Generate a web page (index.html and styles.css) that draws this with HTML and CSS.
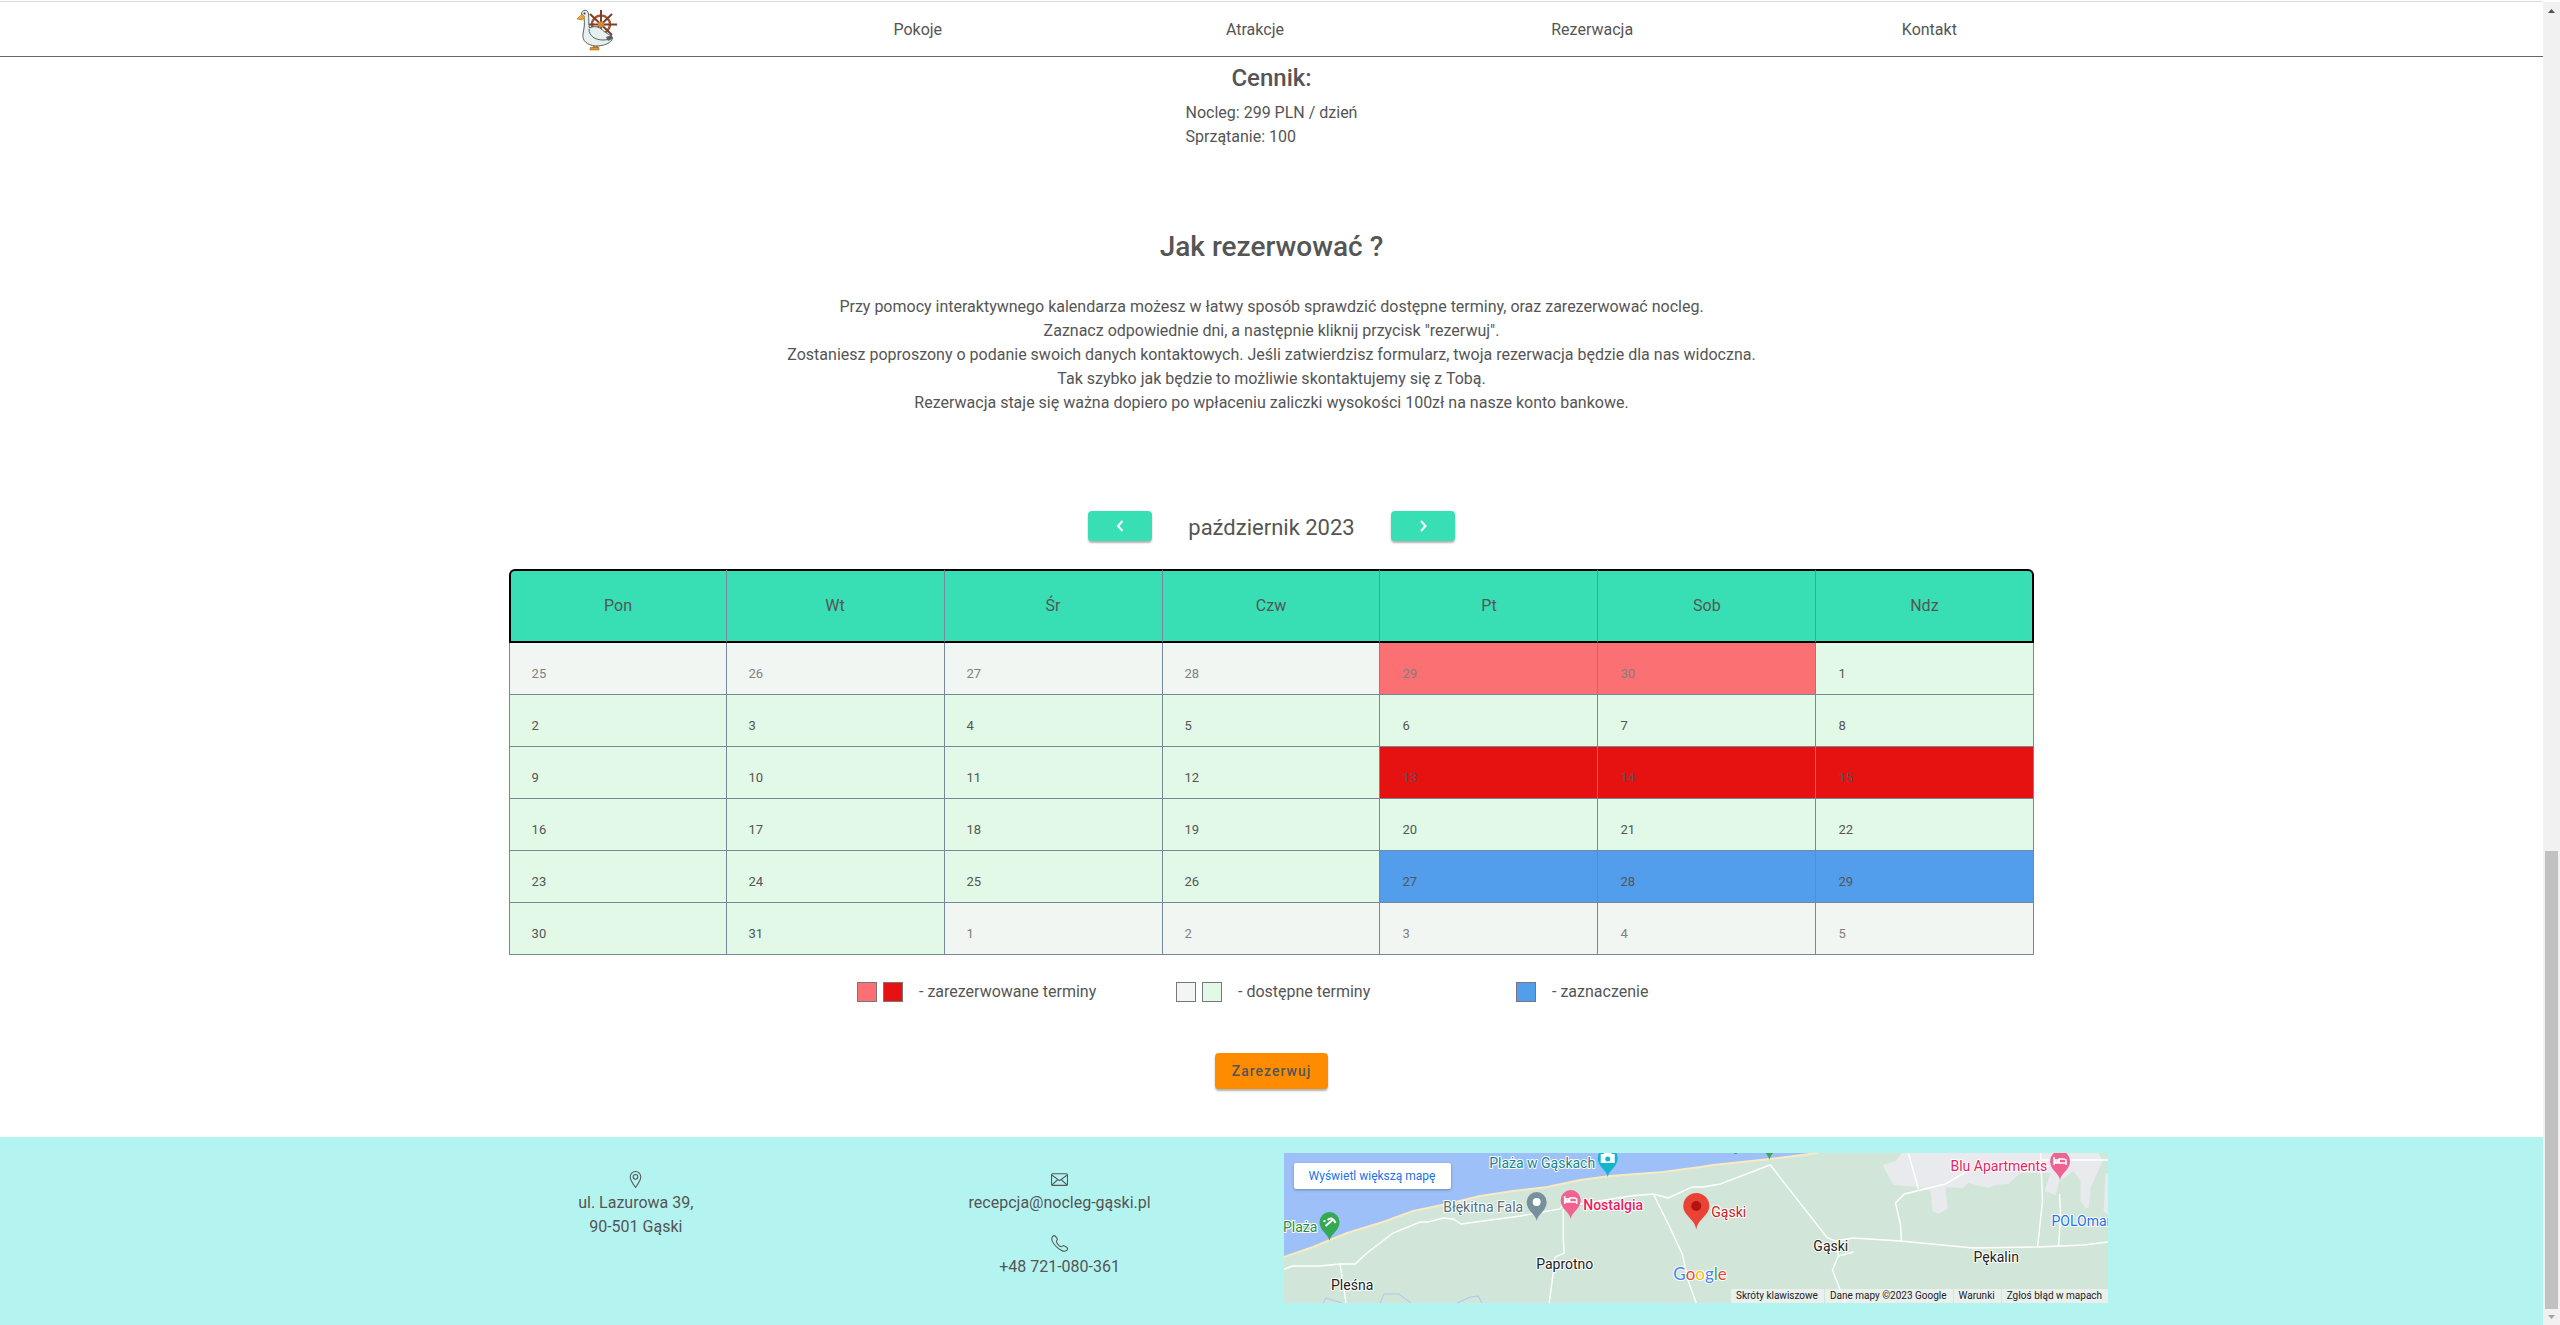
FILE: index.html
```html
<!DOCTYPE html>
<html lang="pl">
<head>
<meta charset="utf-8">
<meta name="viewport" content="width=device-width, initial-scale=1">
<title>Nocleg Gąski</title>
<link rel="stylesheet" href="styles.css">
</head>
<body>
<div class="page">
  <header class="topbar">
    <nav class="nav">
      <a class="nav-logo" href="#" aria-label="Strona główna">
        <svg width="42" height="42" viewBox="0 0 42 42">
          <g fill="none" stroke="#7b3f2c" stroke-width="2">
            <circle cx="24" cy="15.500" r="9" stroke="#a5572f" stroke-width="2.500"/>
            <path d="M24 1v29M9 15.500h31M13 5l22 21M35 5L13 26"/>
          </g>
          <circle cx="24" cy="15.500" r="3" fill="#d98736"/>
          <path d="M17 35v5M20 35v5" stroke="#d98a1c" stroke-width="2.500"/>
          <path d="M13 38.500h9v2.500h-9z" fill="#e09a25" stroke="#7a5a20" stroke-width=".5"/>
          <path d="M4.500 5C5 0 11 0 11.500 5c.5 5 0 11 1 14 4-2 9-2 13 2 4 4 9 5 10 8-1 5-8 8-17 8C10 36 5 32 6 25 7 19 8 15 7 9Z" fill="#e6f0ef" stroke="#5a6062" stroke-width="1"/>
          <path d="M12 20c0 7 6 11 14 11 4 0 8-1 10-3" fill="none" stroke="#5a6062" stroke-width="1"/>
          <path d="M29 28l6-2v4l-4 2z" fill="#5a6062"/>
          <path d="M5 5L0 10l5 1 3-3z" fill="#efa42f" stroke="#8a6420" stroke-width=".5"/>
          <circle cx="7.500" cy="4.500" r="1" fill="#333"/>
        </svg>
      </a>
      <a href="#pokoje">Pokoje</a>
      <a href="#atrakcje">Atrakcje</a>
      <a href="#rezerwacja">Rezerwacja</a>
      <a href="#kontakt">Kontakt</a>
    </nav>
  </header>

  <main class="content">
    <section class="pricing">
      <h3>Cennik:</h3>
      <div>Nocleg: 299 PLN / dzień<br>Sprzątanie: 100</div>
    </section>

    <section class="howto">
      <h2>Jak rezerwować ?</h2>
      <p>Przy pomocy interaktywnego kalendarza możesz w łatwy sposób sprawdzić dostępne terminy, oraz zarezerwować nocleg.<br>
      Zaznacz odpowiednie dni, a następnie kliknij przycisk "rezerwuj".<br>
      Zostaniesz poproszony o podanie swoich danych kontaktowych. Jeśli zatwierdzisz formularz, twoja rezerwacja będzie dla nas widoczna.<br>
      Tak szybko jak będzie to możliwie skontaktujemy się z Tobą.<br>
      Rezerwacja staje się ważna dopiero po wpłaceniu zaliczki wysokości 100zł na nasze konto bankowe.</p>
    </section>

    <section class="calendar">
      <div class="month">
        <button class="month-btn" type="button" aria-label="Poprzedni miesiąc"><svg width="20" height="20" viewBox="0 0 20 20"><path d="M12.500 5L8 10l4.500 5"/></svg></button>
        <span class="month-name">październik 2023</span>
        <button class="month-btn" type="button" aria-label="Następny miesiąc"><svg width="20" height="20" viewBox="0 0 20 20"><path d="M8 5l4.500 5L8 15"/></svg></button>
      </div>
      <table class="days">
        <thead>
          <tr><th>Pon</th><th>Wt</th><th>Śr</th><th>Czw</th><th>Pt</th><th>Sob</th><th>Ndz</th></tr>
        </thead>
        <tbody>
          <tr><td class="out">25</td><td class="out">26</td><td class="out">27</td><td class="out">28</td><td class="out taken-out">29</td><td class="out taken-out">30</td><td>1</td></tr>
          <tr><td>2</td><td>3</td><td>4</td><td>5</td><td>6</td><td>7</td><td>8</td></tr>
          <tr><td>9</td><td>10</td><td>11</td><td>12</td><td class="taken">13</td><td class="taken">14</td><td class="taken">15</td></tr>
          <tr><td>16</td><td>17</td><td>18</td><td>19</td><td>20</td><td>21</td><td>22</td></tr>
          <tr><td>23</td><td>24</td><td>25</td><td>26</td><td class="picked">27</td><td class="picked">28</td><td class="picked">29</td></tr>
          <tr><td>30</td><td>31</td><td class="out">1</td><td class="out">2</td><td class="out">3</td><td class="out">4</td><td class="out">5</td></tr>
        </tbody>
      </table>
      <div class="legend">
        <div class="legend-item"><i class="swatch taken-out"></i><i class="swatch taken"></i><span>- zarezerwowane terminy</span></div>
        <div class="legend-item"><i class="swatch out"></i><i class="swatch free"></i><span>- dostępne terminy</span></div>
        <div class="legend-item"><i class="swatch picked"></i><span>- zaznaczenie</span></div>
      </div>
      <button class="reserve" type="button">Zarezerwuj</button>
    </section>
  </main>

  <footer class="footer">
    <div class="footer-grid">
      <address class="contact">
        <div class="contact-item">
          <svg class="icon" viewBox="0 0 16 16"><path d="M8 15.500C5 11.500 3 8.500 3 5.500a5 5 0 0 1 10 0c0 3-2 6-5 10z"/><circle cx="8" cy="5.500" r="2.200"/></svg>
          <span>ul. Lazurowa 39,<br>90-501 Gąski</span>
        </div>
      </address>
      <address class="contact">
        <div class="contact-item">
          <svg class="icon" viewBox="0 0 16 16"><rect x=".5" y="2.500" width="15" height="11" rx="1"/><path d="M1 4l7 5 7-5M1 13l5.500-5M15 13L9.500 8"/></svg>
          <a href="mailto:recepcja@nocleg-gąski.pl">recepcja@nocleg-gąski.pl</a>
        </div>
        <div class="contact-item">
          <svg class="icon" viewBox="0 0 16 16"><path d="M1.500 1.500C2.500.3 3.500.3 4.300 1.300L6 3.800C6.300 4.500 5 5.500 5 6.300 5.300 8 8.200 10.800 9.700 11c.8 0 1.700-1.300 2.500-1l2.800 1.800c.8.700.8 1.500 0 2.500-1.300 1.300-2.800 1.500-5 .3C6 12.400 3 9.500 1.300 6 .5 4.200.5 2.700 1.500 1.500z"/></svg>
          <a href="tel:+48721080361">+48 721-080-361</a>
        </div>
      </address>
      <div class="map">
        <svg class="map-canvas" viewBox="0 0 824 150" preserveAspectRatio="xMidYMid slice" role="img" aria-label="Mapa">
          <defs>
            <path id="pin" d="M0 0C-1-7-10-10-10-19a10 10 0 0 1 20 0C10-10 1-7 0 0z"/>
            <path id="bed" d="M-6-23v8M-6-17H6v2M6-17v-3l-2-1h-5v4M-5-20h3v2h-3z" fill="none" stroke="#fff" stroke-width="1.500"/>
          </defs>
          <rect width="824" height="150" fill="#d1e6d9"/>
          <path class="town" d="M618 0L611 8 598 12 609 32 634 34 646 38 648 58 654 61 663 56 661 34 678 35 684 30 704 35 711 32 724 31 736 20 766 20 760 38 771 42 775 28 789 18 796 28 796 48 801 55 804 55 806 35 818 8 814 0zM824 20h-3l-2 38 5 4z"/>
          <path fill="#9dc0f9" d="M0 0V104L29 94 46 87 63 80 99 69 129 58 163 51 196 43 229 38 263 34 296 27 326 23 379 19 416 14 429 12 486 6 534 0z"/>
          <path fill="none" stroke="#fbeac0" stroke-width="2" d="M0 104L29 94 46 87 63 80 99 69 129 58 163 51 196 43 229 38 263 34 296 27 326 23 379 19 416 14 429 12 486 6 534 0"/>
          <path class="creek" d="M39 150l3-5 16 5M96 150l4-9h15l12 9M173 150l13-6 8-1 4 7"/>
          <path class="road" d="M0 116L9 113H36L56 111H71L83 100 109 80 136 69H144L159 65 169 66 177 71 236 63 276 56 279 51 296 51 346 43 369 41 384 45 408 34 419 34 436 31 486 12 543 85 551 88 569 85 616 88 689 95 753 94 799 92 824 89M279 56V85L280 100 271 104 268 128 265 150M56 111L62 150M369 41L384 71 398 101 404 128 412 150M551 88L554 103 548 117 561 150M554 103L569 99M624 0L634 36M683 18L661 31 620 41 611 50 616 71 617 88M756 0L758 48 753 94M775 41L776 65 774 93M758 7H824"/>
          <use href="#pin" x="485" y="7" fill="#34a853"/>
          <path d="M450 0q2 1 3-1" stroke="#1e8e3e" fill="none"/>
          <g transform="translate(45.500 88)"><use href="#pin" fill="#34a853"/><path d="M-4-15l7-6M-2-21q5-4 8 3M-4-20h-2" fill="none" stroke="#fff" stroke-width="2"/></g>
          <g transform="translate(252.500 68)"><use href="#pin" fill="#78909c"/><circle cy="-19" r="4" fill="#fff"/></g>
          <g transform="translate(286.500 66)"><use href="#pin" fill="#f06292"/><use href="#bed"/></g>
          <g transform="translate(323.500 24)"><use href="#pin" fill="#12b5cb"/><path d="M-7-23h3l1-2h6l1 2h3v9H-7z" fill="#fff"/><circle cy="-18" r="2.500" fill="#12b5cb"/></g>
          <g transform="translate(775.500 27)"><use href="#pin" fill="#f06292"/><use href="#bed"/></g>
          <path d="M412 77C411 66 399 63 399 53a13 13 0 0 1 26 0C425 63 413 66 412 77z" fill="#ea4335"/>
          <circle cx="412" cy="53" r="5" fill="#b31412"/>
          <g class="labels">
            <text x="205" y="15" fill="#12858d">Plaża w Gąskach</text>
            <text x="239" y="59" fill="#546e7a" text-anchor="end">Błękitna Fala</text>
            <text x="299" y="57" fill="#e91e63" font-weight="500">Nostalgia</text>
            <text x="-1" y="79" fill="#1e8e3e">Plaża</text>
            <text x="47" y="137">Pleśna</text>
            <text x="252" y="116">Paprotno</text>
            <text x="427" y="64" fill="#c5221f">Gąski</text>
            <text x="529" y="98">Gąski</text>
            <text x="689" y="109">Pękalin</text>
            <text x="666" y="18" fill="#e91e63">Blu Apartments</text>
            <text x="767" y="73" fill="#1a73e8">POLOmar</text>
            <text class="brand" x="389" y="127"><tspan fill="#4285f4">G</tspan><tspan fill="#ea4335">o</tspan><tspan fill="#fbbc04">o</tspan><tspan fill="#4285f4">g</tspan><tspan fill="#34a853">l</tspan><tspan fill="#ea4335">e</tspan></text>
          </g>
        </svg>
        <a class="map-open" href="#mapa">Wyświetl większą mapę</a>
        <div class="map-credits"><button type="button">Skróty klawiszowe</button><span>Dane mapy ©2023 Google</span><a href="#warunki">Warunki</a><a href="#blad">Zgłoś błąd w mapach</a></div>
      </div>
    </div>
  </footer>
</div>
<div class="scrollbar" aria-hidden="true">
  <svg width="17" height="17" viewBox="0 0 17 17"><path d="M5 11h7L8.500 7z" fill="#505050"/></svg>
  <div class="scroll-thumb"></div>
  <svg width="17" height="17" viewBox="0 0 17 17"><path d="M5 6h7l-3.500 4z" fill="#a3a3a3"/></svg>
</div>
</body>
</html>
```
FILE: styles.css
```css
* { box-sizing: border-box; }

body {
  margin: 0;
  display: flex;
  min-height: 100vh;
  background: #fff;
  color: #555;
  font: 16px/24px Roboto, sans-serif;
}

a { color: inherit; text-decoration: none; }
h2, h3, p { margin: 0; font-weight: 500; }
p { font-weight: 400; }
button { border: 0; padding: 0; font: inherit; color: inherit; cursor: pointer; }

.page {
  flex: 1;
  min-width: 0;
  display: flex;
  flex-direction: column;
}

/* top navigation */
.topbar {
  border-top: 1px solid #dadcdc;
  border-bottom: 1px solid #666;
  margin-top: 1px;
}
.nav {
  display: grid;
  grid-template-columns: repeat(5, 1fr);
  align-items: center;
  height: 54px;
  padding: 2px 17.5% 0 16.2%;
  text-align: center;
}
.nav-logo { padding-left: 34px; }
.nav-logo svg { display: block; margin: 0 auto; }

/* content */
.content {
  flex: 1;
  display: flex;
  flex-direction: column;
  align-items: center;
}
.pricing { padding-top: 5px; }
.pricing h3 {
  font-size: 24px;
  line-height: 32px;
  text-align: center;
  margin-bottom: 7px;
}
.howto { padding-top: 80px; text-align: center; }
.howto h2 {
  font-size: 28px;
  line-height: 36px;
  margin-bottom: 30px;
}

.calendar {
  width: 100%;
  padding-top: 96px;
  display: flex;
  flex-direction: column;
  align-items: center;
}
.month { display: flex; gap: 36px; height: 30px; }
.month-name { font-size: 22px; line-height: 34px; }
.month-btn {
  width: 64px;
  height: 30px;
  border-radius: 4px;
  background: #38dfb4;
  box-shadow: 0 2px 2px rgba(0, 0, 0, .3);
}
.month-btn svg {
  display: block;
  margin: 0 auto;
  fill: none;
  stroke: #fff;
  stroke-width: 2;
}

.days {
  width: 60%;
  margin-top: 28px;
  table-layout: fixed;
  border-spacing: 0;
}
.days th {
  height: 74px;
  padding: 0;
  font-weight: 400;
  background: #38dfb4;
  border: solid #000;
  border-width: 2px 0;
  border-right: 1px solid #778899;
}
.days th:first-child { border-left: 2px solid #000; border-top-left-radius: 6px; }
.days th:last-child { border-right: 2px solid #000; border-top-right-radius: 6px; }
.days td {
  height: 52px;
  padding: 10px 0 0 22px;
  font-size: 13px;
  background: #e2f9e7;
  border: solid #778899;
  border-width: 0 1px 1px 0;
}
.days td:first-child { border-left-width: 1px; }
.days .out { color: #808080; background: #f1f6f3; }
.days .taken-out, .swatch.taken-out { background: #fb7072; }
.days .taken, .swatch.taken { background: #e61212; }
.days .picked, .swatch.picked { background: #529eec; }

.legend {
  display: grid;
  grid-template-columns: 319px 340px 170px;
  margin-top: 25px;
}
.legend-item { display: flex; align-items: center; gap: 6px; }
.legend-item span { padding-left: 10px; }
.swatch { width: 20px; height: 20px; border: 1px solid #777; }
.swatch.out { background: #f1f6f3; }
.swatch.free { background: #e2f9e7; }

.reserve {
  height: 36px;
  margin: 49px 0 48px;
  padding: 0 17px;
  border-radius: 4px;
  background: #ff8c00;
  font-size: 14px;
  font-weight: 500;
  letter-spacing: 1px;
  box-shadow: 0 2px 2px rgba(0, 0, 0, .3);
}

/* footer */
.footer { background: #b4f4f0; }
.footer-grid {
  display: grid;
  grid-template-columns: 1fr 1fr 2fr;
  width: 66.66%;
  min-height: 189px;
  margin: 0 auto;
  padding: 16px 0 23px;
}
.contact {
  display: flex;
  flex-direction: column;
  gap: 20px;
  padding-top: 18px;
  font-style: normal;
  text-align: center;
}
.contact-item { display: flex; flex-direction: column; align-items: center; gap: 3px; }
.icon {
  width: 17px;
  height: 17px;
  fill: none;
  stroke: #555;
  stroke-width: 1;
}

.map {
  position: relative;
  height: 150px;
  margin: 0 11px 0 12px;
  overflow: hidden;
}
.map-canvas { display: block; width: 100%; height: 100%; }
.town { fill: #e8eaed; }
.road { fill: none; stroke: #fff; stroke-width: 1.4; }
.creek { fill: none; stroke: #a9cbe8; }
.labels {
  font-size: 14px;
  fill: #222;
  stroke: #fff;
  stroke-width: 2px;
  stroke-linejoin: round;
  paint-order: stroke;
}
.brand { font-family: Lato, sans-serif; font-size: 17px; }
.map-open {
  position: absolute;
  left: 10px;
  top: 10px;
  width: 157px;
  border-radius: 2px;
  background: #fff;
  color: #1a73e8;
  font-size: 12px;
  line-height: 26px;
  text-align: center;
  box-shadow: 0 1px 3px rgba(0, 0, 0, .3);
}
.map-credits {
  position: absolute;
  right: 0;
  bottom: 0;
  display: flex;
  gap: 1px;
  font-size: 10px;
  line-height: 14px;
  color: #222;
}
.map-credits > * { padding: 0 6px 0 5px; background: rgba(245, 245, 245, .7); }

/* scroll track */
.scrollbar {
  width: 17px;
  margin-top: 2px;
  background: #f1f1f1;
  display: flex;
  flex-direction: column;
}
.scrollbar svg { display: block; }
.scroll-thumb {
  width: 13px;
  height: 34.6%;
  margin: auto 2px 0;
  background: #c1c1c1;
}
```
